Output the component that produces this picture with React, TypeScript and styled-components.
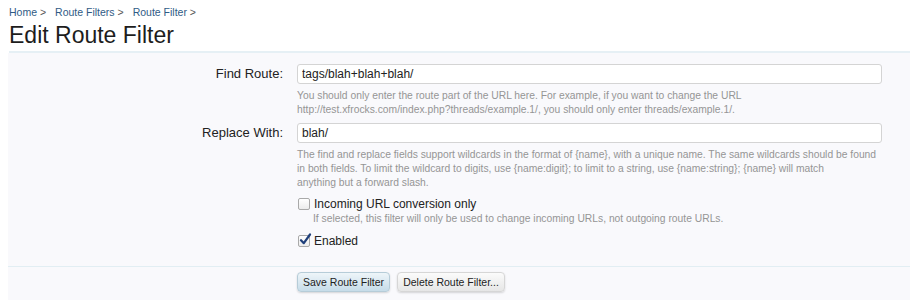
import styled, { createGlobalStyle } from "styled-components";

const GlobalStyle = createGlobalStyle`
  body {
    margin: 0;
    background: #fff;
    font-family: "Liberation Sans", Arial, sans-serif;
    color: #222;
  }
`;

const Page = styled.div`
  padding: 5px 9px 0 8px;
`;

const Crumbs = styled.div`
  display: flex;
  gap: 9px;
  font-size: 10.5px;
  line-height: 14px;
  padding-left: 1px;
`;

const Crumb = styled.a`
  color: #2f5b85;
  text-decoration: none;
  &::after {
    content: " >";
    color: #555;
  }
`;

const Title = styled.h1`
  margin: 2px 0 0 1px;
  font-size: 23px;
  font-weight: normal;
  line-height: 28px;
  color: #1d1d1d;
  padding-bottom: 2px;
  border-bottom: 2px solid #e6f0f5;
`;

const Form = styled.form`
  background: #f9f9fc;
  padding-top: 11px;
`;

const Row = styled.div`
  display: grid;
  grid-template-columns: 275px 1fr;
  column-gap: 14px;
  margin-bottom: 6px;
`;

const Label = styled.label`
  text-align: right;
  font-size: 13px;
  line-height: 20px;
  color: #222;
`;

const Field = styled.div`
  padding-right: 28px;
`;

const TextInput = styled.input`
  box-sizing: border-box;
  width: 100%;
  height: 20px;
  padding: 1px 4px;
  border: 1px solid #d4d4d4;
  border-radius: 3px;
  background: #fff;
  font-family: inherit;
  font-size: 12px;
  color: #222;
  outline: none;
`;

const Explain = styled.p<{ $indent?: boolean }>`
  margin: ${(p) => (p.$indent ? "-1px 0 0 16px" : "5px 0 0 0")};
  font-size: 10.3px;
  line-height: 14px;
  color: #959595;
  white-space: nowrap;
`;

const CheckLine = styled.label`
  display: flex;
  align-items: center;
  gap: 4px;
  font-size: 12px;
  line-height: 18px;
  color: #222;
`;

const Box = styled.span`
  position: relative;
  box-sizing: border-box;
  width: 12px;
  height: 12px;
  margin-left: 1px;
  border: 1px solid #a9a9a9;
  border-radius: 2px;
  background: linear-gradient(#ffffff, #ececec);
  svg {
    position: absolute;
    left: 0;
    top: -3px;
  }
`;

const Tick = () => (
  <svg width="13" height="13" viewBox="0 0 13 13">
    <path
      d="M2 7.2 L4.8 10.2 L11 1.5"
      fill="none"
      stroke="#1f3f7a"
      strokeWidth="2.2"
      strokeLinecap="round"
      strokeLinejoin="round"
    />
  </svg>
);

const Checkbox = ({ checked, children }: { checked?: boolean; children: string }) => (
  <CheckLine>
    <Box>{checked && <Tick />}</Box>
    {children}
  </CheckLine>
);

const Options = styled.div`
  display: flex;
  flex-direction: column;
  gap: 6px;
  margin-top: -1px;
  padding-bottom: 10px;
`;

const Footer = styled.div`
  display: grid;
  grid-template-columns: 275px 1fr;
  column-gap: 14px;
  border-top: 1px solid #e2eef3;
  padding: 5px 0 8px;
`;

const Buttons = styled.div`
  display: flex;
  gap: 7px;
`;

const Button = styled.button<{ $primary?: boolean }>`
  height: 20px;
  padding: 0 5px;
  border: 1px solid ${(p) => (p.$primary ? "#b6ccd8" : "#d6d6d6")};
  border-radius: 4px;
  background: ${(p) =>
    p.$primary
      ? "linear-gradient(#eef5f9, #c6dce9)"
      : "linear-gradient(#fbfbfb, #e6e6e6)"};
  box-shadow: 0 1px 2px rgba(0, 0, 0, 0.15);
  font-family: inherit;
  font-size: 10.5px;
  color: #222;
`;

export default function App() {
  return (
    <>
      <GlobalStyle />
      <Page>
        <Crumbs>
          <Crumb href="#">Home</Crumb>
          <Crumb href="#">Route Filters</Crumb>
          <Crumb href="#">Route Filter</Crumb>
        </Crumbs>
        <Title>Edit Route Filter</Title>
        <Form>
          <Row>
            <Label>Find Route:</Label>
            <Field>
              <TextInput defaultValue="tags/blah+blah+blah/" />
              <Explain>
                You should only enter the route part of the URL here. For example, if you want to change the URL
                <br />
                http://test.xfrocks.com/index.php?threads/example.1/, you should only enter threads/example.1/.
              </Explain>
            </Field>
          </Row>
          <Row>
            <Label>Replace With:</Label>
            <Field>
              <TextInput defaultValue="blah/" />
              <Explain>
                The find and replace fields support wildcards in the format of {"{name}"}, with a unique name. The same wildcards should be found
                <br />
                in both fields. To limit the wildcard to digits, use {"{name:digit}"}; to limit to a string, use {"{name:string}"}; {"{name}"} will match
                <br />
                anything but a forward slash.
              </Explain>
            </Field>
          </Row>
          <Row>
            <div />
            <Options>
              <div>
                <Checkbox>Incoming URL conversion only</Checkbox>
                <Explain $indent>
                  If selected, this filter will only be used to change incoming URLs, not outgoing route URLs.
                </Explain>
              </div>
              <Checkbox checked>Enabled</Checkbox>
            </Options>
          </Row>
          <Footer>
            <div />
            <Buttons>
              <Button type="button" $primary>
                Save Route Filter
              </Button>
              <Button type="button">Delete Route Filter...</Button>
            </Buttons>
          </Footer>
        </Form>
      </Page>
    </>
  );
}
